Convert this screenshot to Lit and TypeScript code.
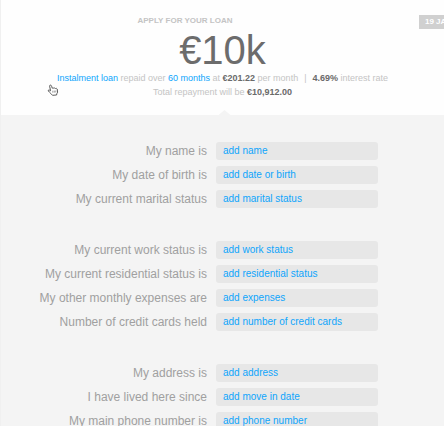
import { LitElement, html, css } from "lit";
import { customElement } from "lit/decorators.js";

interface Field {
  id: string;
  label: string;
  prompt: string;
}

const GROUPS: Field[][] = [
  [
    { id: "name", label: "My name is", prompt: "add name" },
    { id: "birth", label: "My date of birth is", prompt: "add date or birth" },
    { id: "marital", label: "My current marital status", prompt: "add marital status" },
  ],
  [
    { id: "work", label: "My current work status is", prompt: "add work status" },
    { id: "residential", label: "My current residential status is", prompt: "add residential status" },
    { id: "expenses", label: "My other monthly expenses are", prompt: "add expenses" },
    { id: "cards", label: "Number of credit cards held", prompt: "add number of credit cards" },
  ],
  [
    { id: "address", label: "My address is", prompt: "add address" },
    { id: "moved", label: "I have lived here since", prompt: "add move in date" },
    { id: "phone", label: "My main phone number is", prompt: "add phone number" },
  ],
];

@customElement("loan-summary")
class LoanSummary extends LitElement {
  static styles = css`
    :host {
      display: block;
      position: relative;
      padding: 14px 0 16px;
      overflow: hidden;
      background: #fefefe;
      text-align: center;
      color: #c4c4c4;
    }
    .title {
      margin: 0 75px 0 0;
      font-size: 8px;
      font-weight: bold;
      line-height: 14px;
      color: #c4c4c4;
    }
    .date {
      position: absolute;
      top: 15px;
      left: calc(100% - 25px);
      padding: 0 6px;
      font-size: 8px;
      font-weight: bold;
      line-height: 14px;
      white-space: nowrap;
      background: #d0d0d0;
      color: #fff;
    }
    .amount {
      padding-top: 1px;
      font-size: 40px;
      line-height: 42px;
      color: #6c6c6c;
    }
    .line {
      margin: 0;
      font-size: 9px;
      line-height: 14px;
      white-space: nowrap;
    }
    a {
      color: #0ea5fc;
      text-decoration: none;
    }
    b {
      color: #6a6a6a;
    }
    .divider {
      padding: 0 6px;
    }
    .notch {
      position: absolute;
      left: 50%;
      bottom: 0;
      width: 12px;
      height: 5px;
      margin-left: -4px;
      background: #f4f4f4;
      clip-path: polygon(50% 0, 100% 100%, 0 100%);
    }
    .hand {
      position: absolute;
      left: 46px;
      top: 84px;
    }
  `;

  render() {
    return html`
      <h1 class="title">APPLY FOR YOUR LOAN</h1>
      <div class="date">19 JAN 2015</div>
      <div class="amount">€10k</div>
      <p class="line">
        <a href="#type">Instalment loan</a> repaid over <a href="#term">60 months</a> at
        <b>€201.22</b> per month<span class="divider">|</span><b>4.69%</b> interest rate
      </p>
      <p class="line">Total repayment will be <b>€10,912.00</b></p>
      <div class="notch"></div>
      <svg class="hand" width="12" height="12" viewBox="0 0 12 12" aria-hidden="true">
        <path
          d="M3.6 6.8 L2.6 2.2 Q2.6 1 3.6 1.1 Q4.3 1.2 4.6 2.2 L5.2 4.2 Q6 3.5 6.8 4.2 Q7.8 3.6 8.5 4.5 Q9.6 4 10.2 5 L10.6 8.1 Q10.6 9 9.8 9.7 L9.6 11 L5.5 11.3 Q3.8 9.4 2.3 8 Q.8 6.8 1.4 6.1 Q2 5.5 3.6 6.8Z"
          fill="#fff" stroke="#5c5c5c" stroke-width="1" stroke-linejoin="round" />
        <path d="M5.8 6.7v2M7.3 6.6v2M8.8 6.5v2" fill="none" stroke="#777" stroke-width=".7" />
      </svg>
    `;
  }
}

@customElement("loan-form")
class LoanForm extends LitElement {
  static styles = css`
    :host {
      display: block;
      padding: 27px 0;
    }
    form {
      display: flex;
      flex-direction: column;
      gap: 33px;
    }
    .group {
      display: flex;
      flex-direction: column;
      gap: 6px;
    }
    .row {
      display: grid;
      grid-template-columns: 206fr 228fr;
      align-items: center;
      column-gap: 9px;
    }
    label {
      font-size: 12px;
      line-height: 18px;
      text-align: right;
      white-space: nowrap;
      color: #a0a0a0;
    }
    input {
      box-sizing: border-box;
      width: 71%;
      height: 18px;
      margin: 0;
      padding: 0 7px;
      border: 0;
      border-radius: 3px;
      background: #e7e7e7;
      font: 10px / 18px "Liberation Sans", Arial, sans-serif;
      color: #0ea5fc;
    }
    input::placeholder {
      color: #0ea5fc;
      opacity: 1;
    }
  `;

  render() {
    return html`
      <form>
        ${GROUPS.map(
          (group) => html`<div class="group">
            ${group.map(
              (f) => html`<div class="row">
                <label for=${f.id}>${f.label}</label>
                <input id=${f.id} type="text" placeholder=${f.prompt} />
              </div>`
            )}
          </div>`
        )}
      </form>
    `;
  }
}

@customElement("app-root")
class AppRoot extends LitElement {
  static styles = css`
    :host {
      display: block;
      box-sizing: border-box;
      height: 100vh;
      overflow: hidden;
      border-left: 1px solid #f0f0f0;
      background: #f4f4f4;
      font-family: "Liberation Sans", Arial, sans-serif;
    }
  `;

  render() {
    return html`<loan-summary></loan-summary><loan-form></loan-form>`;
  }
}
